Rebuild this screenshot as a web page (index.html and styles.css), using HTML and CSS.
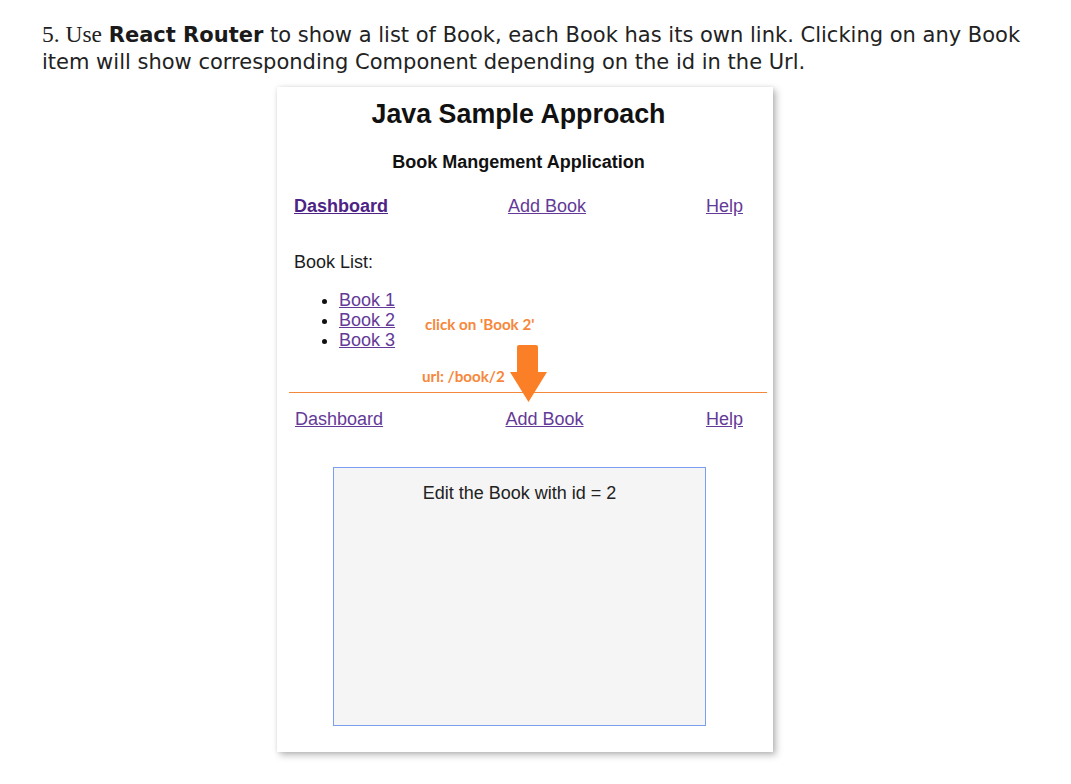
FILE: index.html
```html
<!DOCTYPE html>
<html lang="en">
<head>
<meta charset="utf-8">
<title>React Router Book List</title>
<link rel="stylesheet" href="styles.css">
</head>
<body>
<p class="intro"><span class="num">5. Use</span> <b>React Router</b> to show a list of Book, each Book has its own link. Clicking on any Book item will show corresponding Component depending on the id in the Url.</p>
<div class="card">
  <h1 class="title">Java Sample Approach</h1>
  <h2 class="subtitle">Book Mangement Application</h2>
  <nav class="nav">
    <a href="#" class="link active">Dashboard</a>
    <a href="#" class="link">Add Book</a>
    <a href="#" class="link">Help</a>
  </nav>
  <div class="list-label">Book List:</div>
  <ul class="books">
    <li><a href="#" class="link">Book 1</a></li>
    <li><a href="#" class="link">Book 2</a></li>
    <li><a href="#" class="link">Book 3</a></li>
  </ul>
  <div class="divider"></div>
  <nav class="nav nav2">
    <a href="#" class="link">Dashboard</a>
    <a href="#" class="link">Add Book</a>
    <a href="#" class="link">Help</a>
  </nav>
  <div class="edit-box">Edit the Book with id = 2</div>

  <span class="note note-click">click on 'Book 2'</span>
  <span class="note note-url">url: /book/2</span>
  <svg class="arrow" width="37" height="57" viewBox="0 0 37 57">
    <path d="M9 0 H26 Q28 0 28 2 V27 H37 L18.5 57 L0 27 H7 V2 Q7 0 9 0 Z" fill="#fb7f26"/>
  </svg>
</div>
</body>
</html>
```
FILE: styles.css
```css
html, body {
  margin: 0;
  padding: 0;
  background: #ffffff;
}

body {
  width: 1071px;
  height: 784px;
  overflow: hidden;
}

.intro {
  margin: 22px 0 0 42px;
  width: 1010px;
  height: 54px;
  font-family: "DejaVu Sans", Verdana, sans-serif;
  font-size: 21px;
  line-height: 27px;
  color: #222222;
}

.intro .num {
  font-family: "Liberation Serif", "Times New Roman", serif;
  font-size: 23.5px;
  line-height: 20px;
}

.intro b {
  font-weight: bold;
  color: #1a1a1a;
}

.card {
  position: relative;
  margin: 11px 0 0 277px;
  width: 496px;
  height: 665px;
  box-sizing: border-box;
  padding: 12px 30px 0 17px;
  background: #ffffff;
  box-shadow: 3px 3px 7px rgba(0, 0, 0, 0.28), 0 0 4px rgba(0, 0, 0, 0.08);
  font-family: "Liberation Sans", Arial, sans-serif;
  color: #111111;
}

.title {
  margin: 0;
  font-size: 26.8px;
  line-height: 30px;
  font-weight: bold;
  text-align: center;
}

.subtitle {
  margin: 23px 0 0;
  font-size: 18px;
  line-height: 20px;
  font-weight: bold;
  text-align: center;
}

.nav {
  display: flex;
  justify-content: space-between;
  margin-top: 24px;
  font-size: 18px;
  line-height: 20px;
}

.link {
  color: #643a98;
  text-decoration: underline;
}

.link.active {
  font-weight: bold;
  color: #4e2386;
}

.list-label {
  margin-top: 36px;
  font-size: 18px;
  line-height: 20px;
  color: #1c1c1c;
}

.books {
  margin: 18px 0 0;
  padding-left: 45px;
  font-size: 18px;
  line-height: 20px;
}

.divider {
  margin: 42px -24px 0 -5px;
  height: 1px;
  background: #f4873a;
}

.nav2 {
  margin-top: 16px;
  padding: 0 0 0 1px;
}

.edit-box {
  margin: 38px auto 0;
  width: 373px;
  height: 259px;
  box-sizing: border-box;
  padding-top: 15px;
  border: 1px solid #7b9ff0;
  background: #f5f5f5;
  text-align: center;
  font-size: 18px;
  line-height: 20px;
  color: #222222;
  transform: translateX(1px);
}

.note {
  position: absolute;
  font-family: Lato, "Noto Sans", sans-serif;
  font-weight: bold;
  font-size: 15.2px;
  line-height: 16px;
  color: #f7873a;
  white-space: nowrap;
}

.note-click {
  left: 148px;
  top: 229px;
}

.note-url {
  left: 145px;
  top: 281px;
}

.arrow {
  position: absolute;
  left: 233px;
  top: 258px;
}
```
